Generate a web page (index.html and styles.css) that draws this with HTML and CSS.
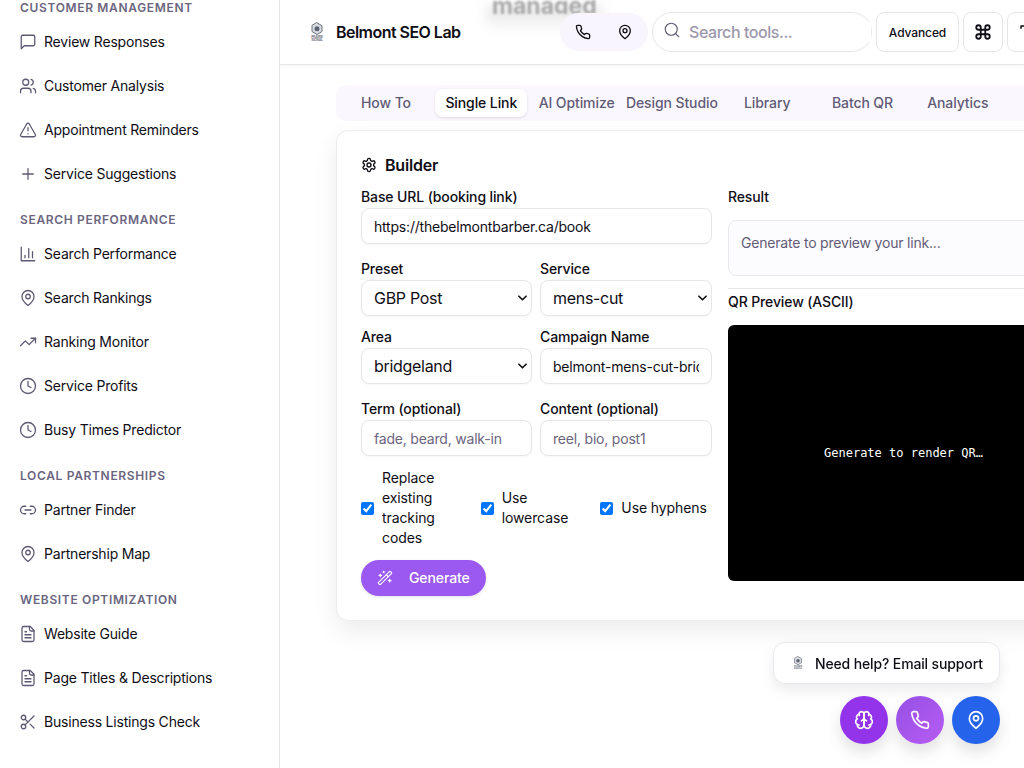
FILE: index.html
```html
<!DOCTYPE html>
<html lang="en">
<head>
    <meta charset="UTF-8">
    <meta name="viewport" content="width=device-width, initial-scale=1.0">
    <title>Belmont SEO Lab</title>
    <link rel="stylesheet" href="styles.css">
</head>
<body>
    <svg class="icon-defs" xmlns="http://www.w3.org/2000/svg">
        <symbol id="i-message" viewBox="0 0 24 24"><path d="M21 15a2 2 0 0 1-2 2H7l-4 4V5a2 2 0 0 1 2-2h14a2 2 0 0 1 2 2z"/></symbol>
        <symbol id="i-users" viewBox="0 0 24 24"><path d="M16 21v-2a4 4 0 0 0-4-4H6a4 4 0 0 0-4 4v2"/><circle cx="9" cy="7" r="4"/><path d="M22 21v-2a4 4 0 0 0-3-3.87"/><path d="M16 3.13a4 4 0 0 1 0 7.75"/></symbol>
        <symbol id="i-alert" viewBox="0 0 24 24"><path d="m21.73 18-8-14a2 2 0 0 0-3.48 0l-8 14A2 2 0 0 0 4 21h16a2 2 0 0 0 1.73-3"/><path d="M12 9v4"/><path d="M12 17h.01"/></symbol>
        <symbol id="i-plus" viewBox="0 0 24 24"><path d="M5 12h14"/><path d="M12 5v14"/></symbol>
        <symbol id="i-chart" viewBox="0 0 24 24"><path d="M3 3v18h18"/><path d="M18 17V9"/><path d="M13 17V5"/><path d="M8 17v-3"/></symbol>
        <symbol id="i-pin" viewBox="0 0 24 24"><path d="M20 10c0 6-8 12-8 12s-8-6-8-12a8 8 0 0 1 16 0Z"/><circle cx="12" cy="10" r="3"/></symbol>
        <symbol id="i-trend" viewBox="0 0 24 24"><polyline points="22 7 13.5 15.5 8.5 10.5 2 17"/><polyline points="16 7 22 7 22 13"/></symbol>
        <symbol id="i-clock" viewBox="0 0 24 24"><circle cx="12" cy="12" r="10"/><polyline points="12 6 12 12 16 14"/></symbol>
        <symbol id="i-link" viewBox="0 0 24 24"><path d="M9 17H7A5 5 0 0 1 7 7h2"/><path d="M15 7h2a5 5 0 1 1 0 10h-2"/><line x1="8" y1="12" x2="16" y2="12"/></symbol>
        <symbol id="i-file" viewBox="0 0 24 24"><path d="M15 2H6a2 2 0 0 0-2 2v16a2 2 0 0 0 2 2h12a2 2 0 0 0 2-2V7Z"/><path d="M14 2v4a2 2 0 0 0 2 2h4"/><path d="M10 9H8"/><path d="M16 13H8"/><path d="M16 17H8"/></symbol>
        <symbol id="i-scissors" viewBox="0 0 24 24"><circle cx="6" cy="6" r="3"/><path d="M8.12 8.12 12 12"/><path d="M20 4 8.12 15.88"/><circle cx="6" cy="18" r="3"/><path d="M14.8 14.8 20 20"/></symbol>
        <symbol id="i-settings" viewBox="0 0 24 24"><path d="M12.22 2h-.44a2 2 0 0 0-2 2v.18a2 2 0 0 1-1 1.73l-.43.25a2 2 0 0 1-2 0l-.15-.08a2 2 0 0 0-2.73.73l-.22.38a2 2 0 0 0 .73 2.73l.15.1a2 2 0 0 1 1 1.72v.51a2 2 0 0 1-1 1.74l-.15.09a2 2 0 0 0-.73 2.73l.22.38a2 2 0 0 0 2.73.73l.15-.08a2 2 0 0 1 2 0l.43.25a2 2 0 0 1 1 1.73V20a2 2 0 0 0 2 2h.44a2 2 0 0 0 2-2v-.18a2 2 0 0 1 1-1.73l.43-.25a2 2 0 0 1 2 0l.15.08a2 2 0 0 0 2.73-.73l.22-.39a2 2 0 0 0-.73-2.73l-.15-.08a2 2 0 0 1-1-1.74v-.5a2 2 0 0 1 1-1.74l.15-.09a2 2 0 0 0 .73-2.73l-.22-.38a2 2 0 0 0-2.73-.73l-.15.08a2 2 0 0 1-2 0l-.43-.25a2 2 0 0 1-1-1.73V4a2 2 0 0 0-2-2z"/><circle cx="12" cy="12" r="3"/></symbol>
        <symbol id="i-wand" viewBox="0 0 24 24"><path d="m21.64 3.64-1.28-1.28a1.21 1.21 0 0 0-1.72 0L2.36 18.64a1.21 1.21 0 0 0 0 1.72l1.28 1.28a1.2 1.2 0 0 0 1.72 0L21.64 5.36a1.2 1.2 0 0 0 0-1.72"/><path d="m14 7 3 3"/><path d="M5 6v4"/><path d="M19 14v4"/><path d="M10 2v2"/><path d="M7 8H3"/><path d="M21 16h-4"/><path d="M11 3H9"/></symbol>
        <symbol id="i-brain" viewBox="0 0 24 24"><path d="M12 5a3 3 0 1 0-5.997.125 4 4 0 0 0-2.526 5.77 4 4 0 0 0 .556 6.588A4 4 0 1 0 12 18Z"/><path d="M12 5a3 3 0 1 1 5.997.125 4 4 0 0 1 2.526 5.77 4 4 0 0 1-.556 6.588A4 4 0 1 1 12 18Z"/><path d="M15 13a4.5 4.5 0 0 1-3-4 4.5 4.5 0 0 1-3 4"/><path d="M17.599 6.5a3 3 0 0 0 .399-1.375"/><path d="M6.003 5.125A3 3 0 0 0 6.401 6.5"/><path d="M3.477 10.896a4 4 0 0 1 .585-.396"/><path d="M19.938 10.5a4 4 0 0 1 .585.396"/><path d="M6 18a4 4 0 0 1-1.967-.516"/><path d="M19.967 17.484A4 4 0 0 1 18 18"/></symbol>
        <symbol id="i-phone" viewBox="0 0 24 24"><path d="M22 16.92v3a2 2 0 0 1-2.18 2 19.79 19.79 0 0 1-8.63-3.07 19.5 19.5 0 0 1-6-6 19.79 19.79 0 0 1-3.07-8.67A2 2 0 0 1 4.11 2h3a2 2 0 0 1 2 1.72 12.84 12.84 0 0 0 .7 2.81 2 2 0 0 1-.45 2.11L8.09 9.91a16 16 0 0 0 6 6l1.27-1.27a2 2 0 0 1 2.11-.45 12.84 12.84 0 0 0 2.81.7A2 2 0 0 1 22 16.92z"/></symbol>
        <symbol id="i-search" viewBox="0 0 24 24"><circle cx="11" cy="11" r="8"/><path d="m21 21-4.3-4.3"/></symbol>
        <symbol id="i-command" viewBox="0 0 24 24"><path d="M15 6v12a3 3 0 1 0 3-3H6a3 3 0 1 0 3 3V6a3 3 0 1 0-3 3h12a3 3 0 1 0-3-3"/></symbol>
        <symbol id="i-type" viewBox="0 0 24 24"><polyline points="4 7 4 4 20 4 20 7"/><line x1="9" y1="20" x2="15" y2="20"/><line x1="12" y1="4" x2="12" y2="20"/></symbol>
        <symbol id="i-logo" viewBox="0 0 24 24">
            <path class="logo-hex" d="M12 1 18 4.5V11.5L12 15 6 11.5V4.5Z"/>
            <circle class="logo-dot" cx="12" cy="8" r="3"/>
            <text class="logo-text" x="12" y="19">PRAIRIE</text>
            <text class="logo-text" x="12" y="23">SIGNAL</text>
        </symbol>
    </svg>

    <aside class="sidebar">
        <section class="nav-group">
            <h4>CUSTOMER MANAGEMENT</h4>
            <a class="nav-item"><svg class="icon"><use href="#i-message"/></svg>Review Responses</a>
            <a class="nav-item"><svg class="icon"><use href="#i-users"/></svg>Customer Analysis</a>
            <a class="nav-item"><svg class="icon"><use href="#i-alert"/></svg>Appointment Reminders</a>
            <a class="nav-item"><svg class="icon"><use href="#i-plus"/></svg>Service Suggestions</a>
        </section>
        <section class="nav-group">
            <h4>SEARCH PERFORMANCE</h4>
            <a class="nav-item"><svg class="icon"><use href="#i-chart"/></svg>Search Performance</a>
            <a class="nav-item"><svg class="icon"><use href="#i-pin"/></svg>Search Rankings</a>
            <a class="nav-item"><svg class="icon"><use href="#i-trend"/></svg>Ranking Monitor</a>
            <a class="nav-item"><svg class="icon"><use href="#i-clock"/></svg>Service Profits</a>
            <a class="nav-item"><svg class="icon"><use href="#i-clock"/></svg>Busy Times Predictor</a>
        </section>
        <section class="nav-group">
            <h4>LOCAL PARTNERSHIPS</h4>
            <a class="nav-item"><svg class="icon"><use href="#i-link"/></svg>Partner Finder</a>
            <a class="nav-item"><svg class="icon"><use href="#i-pin"/></svg>Partnership Map</a>
        </section>
        <section class="nav-group">
            <h4>WEBSITE OPTIMIZATION</h4>
            <a class="nav-item"><svg class="icon"><use href="#i-file"/></svg>Website Guide</a>
            <a class="nav-item"><svg class="icon"><use href="#i-file"/></svg>Page Titles &amp; Descriptions</a>
            <a class="nav-item"><svg class="icon"><use href="#i-scissors"/></svg>Business Listings Check</a>
        </section>
    </aside>

    <div class="main">
        <header class="topbar">
            <div class="behind-glow"></div>
            <span class="behind-text">managed</span>
            <div class="brand">
                <svg class="brand-logo"><use href="#i-logo"/></svg>
                <span class="brand-name">Belmont SEO Lab</span>
            </div>
            <div class="quick-pill">
                <svg class="icon-sm"><use href="#i-phone"/></svg>
                <svg class="icon-sm"><use href="#i-pin"/></svg>
            </div>
            <label class="search">
                <svg class="search-icon"><use href="#i-search"/></svg>
                <input type="text" placeholder="Search tools...">
            </label>
            <button class="top-btn advanced">Advanced</button>
            <button class="top-btn square"><svg class="icon-sm bold"><use href="#i-command"/></svg></button>
            <button class="top-btn square"><svg class="icon-sm bold thin"><use href="#i-type"/></svg></button>
        </header>

        <div class="content">
            <nav class="tabs">
                <a class="tab">How To</a>
                <a class="tab active">Single Link</a>
                <a class="tab">AI Optimize</a>
                <a class="tab">Design Studio</a>
                <a class="tab">Library</a>
                <a class="tab">Batch QR</a>
                <a class="tab">Analytics</a>
            </nav>

            <div class="card">
                <h3 class="card-title"><svg class="icon-sm"><use href="#i-settings"/></svg>Builder</h3>
                <div class="columns">
                    <form class="builder">
                        <div class="field">
                            <label>Base URL (booking link)</label>
                            <input type="text" value="https://thebelmontbarber.ca/book">
                        </div>
                        <div class="field-grid">
                            <div class="field">
                                <label>Preset</label>
                                <select><option>GBP Post</option></select>
                            </div>
                            <div class="field">
                                <label>Service</label>
                                <select><option>mens-cut</option></select>
                            </div>
                            <div class="field">
                                <label>Area</label>
                                <select><option>bridgeland</option></select>
                            </div>
                            <div class="field">
                                <label>Campaign Name</label>
                                <input type="text" value="belmont-mens-cut-bridgeland">
                            </div>
                        </div>
                        <div class="field-grid">
                            <div class="field">
                                <label>Term (optional)</label>
                                <input type="text" placeholder="fade, beard, walk-in">
                            </div>
                            <div class="field">
                                <label>Content (optional)</label>
                                <input type="text" placeholder="reel, bio, post1">
                            </div>
                        </div>
                        <div class="checks">
                            <label class="check"><input type="checkbox" checked>Replace existing tracking codes</label>
                            <label class="check"><input type="checkbox" checked>Use lowercase</label>
                            <label class="check"><input type="checkbox" checked>Use hyphens</label>
                        </div>
                        <button type="button" class="generate"><svg class="icon-sm"><use href="#i-wand"/></svg><span>Generate</span></button>
                    </form>

                    <div class="output">
                        <label>Result</label>
                        <div class="result-box">Generate to preview your link...</div>
                        <hr>
                        <label>QR Preview (ASCII)</label>
                        <pre class="qr-box">Generate to render QR…</pre>
                    </div>
                </div>
            </div>
        </div>
    </div>

    <a class="help-chip"><svg class="help-logo"><use href="#i-logo"/></svg>Need help? Email support</a>
    <div class="fabs">
        <a class="fab fab-brain"><svg class="icon"><use href="#i-brain"/></svg></a>
        <a class="fab fab-phone"><svg class="icon"><use href="#i-phone"/></svg></a>
        <a class="fab fab-map"><svg class="icon"><use href="#i-pin"/></svg></a>
    </div>
</body>
</html>
```

FILE: styles.css
```css
* {
    box-sizing: border-box;
}
html, body {
    height: 100%;
}
body {
    margin: 0;
    display: flex;
    overflow: hidden;
    background-color: #fff;
    color: #0f0d15;
    font-family: Inter, "Noto Sans", sans-serif;
    font-size: 14px;
    letter-spacing: -0.2px;
}
svg {
    fill: none;
    stroke: currentColor;
    stroke-linecap: round;
    stroke-linejoin: round;
    stroke-width: 1.5;
    flex-shrink: 0;
}
.icon-defs {
    display: none;
}
.icon {
    width: 18px;
    height: 18px;
}
.icon-sm {
    width: 16px;
    height: 16px;
    stroke-width: 2;
}
.icon-sm.bold {
    width: 18px;
    height: 18px;
    stroke-width: 2.4;
}
.icon-sm.bold.thin {
    stroke-width: 2;
}

/* sidebar */
.sidebar {
    width: 280px;
    flex-shrink: 0;
    height: 100%;
    border-right: 1px solid #e6e5ea;
}
.nav-group {
    margin-bottom: 16px;
}
.nav-group h4 {
    margin: 0 0 4px;
    padding-left: 20px;
    font-size: 12px;
    line-height: 16px;
    font-weight: 600;
    letter-spacing: 0.66px;
    color: #6b6580;
}
.nav-item {
    display: flex;
    align-items: center;
    gap: 7px;
    height: 44px;
    padding-left: 19px;
    line-height: 20px;
}
.nav-item .icon {
    stroke-width: 1.7;
    color: #5f5873;
}

/* header */
.main {
    flex: 1;
    min-width: 0;
    overflow: hidden;
}
.topbar {
    position: relative;
    display: flex;
    align-items: center;
    height: 65px;
    padding-left: 27px;
    border-bottom: 1px solid #e6e5ea;
    box-shadow: 0 1px 3px rgba(0, 0, 0, 0.05);
    overflow: hidden;
}
.behind-text {
    position: absolute;
    left: 212px;
    top: 0;
    height: 14px;
    overflow: hidden;
    font-size: 23px;
    line-height: 12px;
    font-weight: 700;
    letter-spacing: 0;
    color: #aaa;
    filter: blur(1px);
}
.behind-glow {
    position: absolute;
    left: 206px;
    top: 6px;
    width: 116px;
    height: 26px;
    background-image: linear-gradient(#e2e2e2, rgba(255, 255, 255, 0));
    filter: blur(6px);
}
.brand {
    position: relative;
    display: flex;
    align-items: center;
    gap: 9px;
    width: 253px;
    flex-shrink: 0;
}
.brand-logo {
    width: 20px;
    height: 20px;
}
.logo-hex {
    stroke: #6f7480;
    stroke-width: 1.2;
    fill: #d9dbe0;
}
.logo-dot {
    stroke: none;
    fill: #5d6472;
}
.logo-text {
    stroke: none;
    fill: #6f7480;
    font-size: 4px;
    font-weight: 700;
    text-anchor: middle;
}
.brand-name {
    font-size: 16px;
    line-height: 24px;
    font-weight: 600;
    letter-spacing: -0.53px;
}
.quick-pill {
    position: relative;
    display: flex;
    align-items: center;
    gap: 26px;
    height: 38px;
    padding: 0 15px;
    margin-right: 4px;
    flex-shrink: 0;
    border-radius: 19px;
    background-color: #f8f5fe;
}
.search {
    display: flex;
    align-items: center;
    gap: 8px;
    width: 220px;
    height: 40px;
    padding-left: 10px;
    margin-right: 4px;
    flex-shrink: 0;
    border: 1px solid #e6e5ea;
    border-radius: 20px;
}
.search-icon {
    width: 18px;
    height: 18px;
    margin-top: -4px;
    color: #5f5873;
}
.search input {
    flex: 1;
    min-width: 0;
    border: none;
    outline: none;
    padding: 0;
    font: inherit;
    font-size: 16px;
    letter-spacing: -0.44px;
    color: #0f0d15;
}
.search input::placeholder {
    color: #9c97ab;
}
.top-btn {
    display: flex;
    align-items: center;
    justify-content: center;
    height: 40px;
    padding: 0;
    margin-right: 4px;
    flex-shrink: 0;
    border: 1px solid #e6e5ea;
    border-radius: 8px;
    background-color: #fff;
    color: #0f0d15;
    font-family: inherit;
    font-size: 12px;
    font-weight: 500;
    letter-spacing: -0.1px;
}
.top-btn.advanced {
    width: 83px;
}
.top-btn.square {
    width: 40px;
}

/* tabs and card */
.content {
    width: 767px;
    margin-left: 56px;
    padding-top: 20px;
}
.tabs {
    display: grid;
    grid-template-columns: repeat(7, 92px);
    column-gap: 3.3px;
    height: 36px;
    padding: 4px;
    margin-bottom: 9px;
    border-radius: 10px;
    background-color: #faf8fe;
}
.tab {
    display: flex;
    align-items: center;
    justify-content: center;
    border-radius: 8px;
    font-weight: 500;
    line-height: 20px;
    letter-spacing: -0.1px;
    white-space: nowrap;
    color: #625b77;
}
.tab.active {
    background-color: #fff;
    color: #0f0d15;
    box-shadow: 0 1px 3px rgba(0, 0, 0, 0.12);
}
.card {
    height: 491px;
    padding: 24px;
    border: 1px solid #ededf1;
    border-radius: 12px;
    background-color: #fff;
    box-shadow: 0 10px 24px rgba(0, 0, 0, 0.08);
}
.card-title {
    display: flex;
    align-items: center;
    gap: 8px;
    height: 20px;
    margin: 0 0 12px;
    font-size: 16px;
    font-weight: 600;
    letter-spacing: -0.2px;
}
.columns {
    display: grid;
    grid-template-columns: 351px 351px;
    column-gap: 16px;
}

/* form */
.builder {
    display: flex;
    flex-direction: column;
    gap: 15px;
}
label {
    font-weight: 500;
    line-height: 20px;
    letter-spacing: -0.12px;
}
.field {
    display: flex;
    flex-direction: column;
    gap: 1px;
    min-width: 0;
}
.field-grid {
    display: grid;
    grid-template-columns: 171px 172px;
    gap: 11px 8px;
}
.field input,
.field select {
    width: 100%;
    height: 36px;
    padding: 0 12px;
    border: 1px solid #e6e5ea;
    border-radius: 8px;
    outline: none;
    background-color: #fff;
    box-shadow: 0 1px 2px rgba(0, 0, 0, 0.04);
    color: #0f0d15;
    font-family: inherit;
    font-size: 14px;
    letter-spacing: -0.2px;
}
.field select {
    appearance: none;
    font-size: 16px;
    letter-spacing: -0.3px;
    background-image: url("data:image/svg+xml,%3Csvg xmlns='http://www.w3.org/2000/svg' viewBox='0 0 10 6'%3E%3Cpath d='M1 1l4 4 4-4' fill='none' stroke='%23111' stroke-width='1.8' stroke-linecap='round' stroke-linejoin='round'/%3E%3C/svg%3E");
    background-repeat: no-repeat;
    background-position: right 4.5px center;
    background-size: 9px 6px;
}
.field input::placeholder {
    color: #6b6580;
}
.checks {
    display: grid;
    grid-template-columns: repeat(3, 1fr);
    column-gap: 8px;
    margin-top: -3px;
}
.check {
    display: flex;
    align-items: center;
    gap: 8px;
    font-weight: 400;
    letter-spacing: -0.1px;
}
.check input {
    margin: 0;
    flex-shrink: 0;
}
.generate {
    display: flex;
    align-items: center;
    gap: 16px;
    width: 125px;
    height: 36px;
    margin-top: -3px;
    padding-left: 16px;
    border: none;
    border-radius: 18px;
    background-color: #9b59f2;
    box-shadow: 0 1px 3px rgba(0, 0, 0, 0.12);
    color: #fff;
    font-family: inherit;
    font-size: 14px;
    font-weight: 500;
    letter-spacing: -0.1px;
}
.generate span {
    margin-top: -2px;
}
.generate .icon-sm {
    stroke-width: 1.75;
}

/* result column */
.output {
    display: flex;
    flex-direction: column;
}
.result-box {
    height: 56px;
    margin-top: 13px;
    padding: 12px;
    border: 1px solid #e9e8ee;
    border-radius: 8px;
    background-color: #fcfbfe;
    color: #625b77;
    line-height: 20px;
}
.output hr {
    width: 100%;
    margin: 12px 0 3px;
    border: none;
    border-top: 1px solid #e6e5ea;
}
.qr-box {
    display: flex;
    align-items: center;
    justify-content: center;
    height: 256px;
    margin: 13px 0 0;
    border-radius: 6px;
    background-color: #000;
    color: #fff;
    font-family: "DejaVu Sans Mono", "Liberation Mono", monospace;
    font-size: 12px;
    letter-spacing: 0;
}

/* floating helpers */
.help-chip {
    position: fixed;
    right: 24px;
    bottom: 84px;
    display: flex;
    align-items: center;
    gap: 10px;
    width: 227px;
    height: 42px;
    padding-left: 17px;
    border: 1px solid #e9e8ee;
    border-radius: 12px;
    background-color: #fff;
    box-shadow: 0 6px 14px rgba(0, 0, 0, 0.08);
    font-weight: 500;
    letter-spacing: -0.14px;
}
.help-logo {
    width: 14px;
    height: 14px;
}
.fabs {
    position: fixed;
    right: 24px;
    bottom: 24px;
    display: flex;
    gap: 8px;
}
.fab {
    display: flex;
    align-items: center;
    justify-content: center;
    width: 48px;
    height: 48px;
    border-radius: 50%;
    color: #fff;
    box-shadow: 0 8px 16px rgba(0, 0, 0, 0.12);
}
.fab .icon {
    width: 20px;
    height: 20px;
    stroke-width: 2;
}
.fab-brain {
    background-color: #9333ea;
}
.fab-phone {
    background-image: linear-gradient(135deg, #9650e4, #b75cf3);
}
.fab-map {
    background-color: #2563eb;
}
```
